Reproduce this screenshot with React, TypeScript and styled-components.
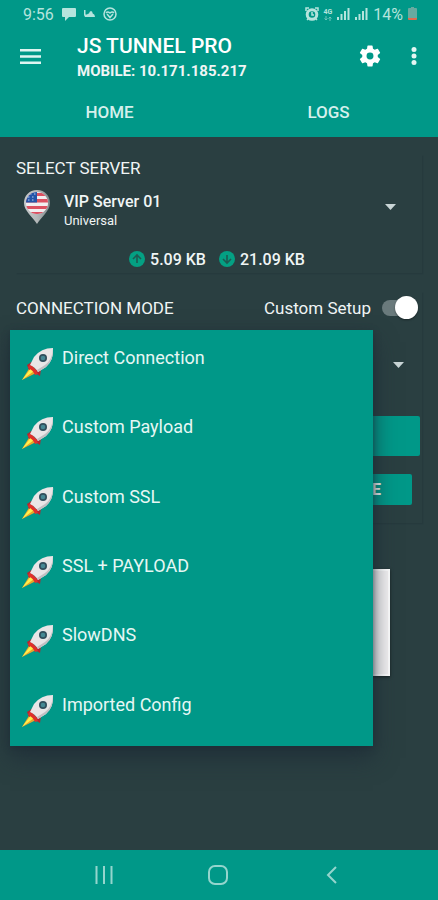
import React, { useState } from "react";
import styled, { createGlobalStyle } from "styled-components";

const teal = "#009888";
const slate = "#2a3f41";

const GlobalStyle = createGlobalStyle`
  * { box-sizing: border-box; }
  body { margin: 0; background: ${slate}; font-family: Roboto, "Liberation Sans", sans-serif; }
  button { font: inherit; color: inherit; background: none; border: 0; padding: 0; cursor: pointer; }
  h1, h2, p, ul { margin: 0; padding: 0; }
  svg { display: block; flex: none; }
`;

const Screen = styled.div`
  display: flex;
  flex-direction: column;
  min-height: 100vh;
  color: #f0f5f5;
  background: ${slate};
`;

const Header = styled.header`
  background: ${teal};
`;

const StatusBar = styled.div`
  display: flex;
  justify-content: space-between;
  align-items: center;
  height: 28px;
  padding: 0 21px 0 23px;
  font-size: 16px;
  color: #b5e4dd;
`;

const StatusGroup = styled.div<{ $gap: number }>`
  display: flex;
  align-items: center;
  gap: ${(p) => p.$gap}px;
`;

const NetworkLabel = styled.span`
  display: flex;
  flex-direction: column;
  align-items: center;
  font-size: 7px;
  line-height: 8px;
  font-weight: 700;
`;

const AppBar = styled.div`
  display: flex;
  align-items: flex-start;
  height: 58px;
  padding: 5px 12px 0 18px;
`;

const IconButton = styled.button`
  display: grid;
  place-items: center;
  width: 24px;
  height: 46px;
`;

const Heading = styled.div`
  flex: 1;
  margin-left: 35px;
`;

const AppTitle = styled.h1`
  font-size: 21px;
  line-height: 26px;
  font-weight: 500;
  color: #fff;
`;

const Address = styled.p`
  font-size: 15px;
  line-height: 24px;
  font-weight: 700;
`;

const BarActions = styled.div`
  display: flex;
  gap: 21px;
`;

const Tabs = styled.nav`
  display: grid;
  grid-template-columns: 1fr 1fr;
  height: 51px;
`;

const Tab = styled.button`
  font-size: 17px;
  font-weight: 500;
  color: #d5f0ec;
`;

const Main = styled.main`
  flex: 1;
  padding: 18px 16px 0;
`;

const ServerCard = styled.section`
  height: 118px;
  box-shadow: 1px 1px 1px #263a3d;
`;

const SectionTitle = styled.h2`
  font-size: 17px;
  line-height: 26px;
  font-weight: 400;
`;

const ServerPicker = styled.button`
  display: flex;
  align-items: center;
  width: 100%;
  height: 52px;
  padding: 0 26px 0 8px;
  text-align: left;
`;

const ServerText = styled.span`
  flex: 1;
  margin-left: 14px;
  padding-top: 6px;
`;

const ServerName = styled.span`
  display: block;
  font-size: 16px;
  line-height: 22px;
  font-weight: 500;
`;

const ServerRegion = styled.span`
  display: block;
  font-size: 13px;
  line-height: 16px;
`;

const Traffic = styled.div`
  display: flex;
  justify-content: center;
  align-items: center;
  gap: 13px;
  height: 52px;
  padding-right: 4px;
`;

const Counter = styled.span`
  display: flex;
  align-items: center;
  gap: 5px;
  font-size: 16px;
  font-weight: 500;
`;

const ModeCard = styled.section`
  position: relative;
  margin-top: 19px;
  padding-bottom: 18px;
  box-shadow: 1px 1px 1px #263a3d;
`;

const ModeHeader = styled.div`
  display: flex;
  justify-content: space-between;
  align-items: center;
  height: 32px;
`;

const SwitchLabel = styled.label`
  display: flex;
  align-items: center;
  gap: 11px;
  padding-right: 4px;
  font-size: 17px;
`;

const Switch = styled.input`
  appearance: none;
  position: relative;
  width: 36px;
  height: 16px;
  margin: 0;
  border-radius: 8px;
  background: #6a7a7c;
  cursor: pointer;

  &::after {
    content: "";
    position: absolute;
    top: -4px;
    left: 0;
    width: 23px;
    height: 23px;
    border-radius: 50%;
    background: #fff;
    box-shadow: 0 1px 2px #0006;
  }

  &:checked::after {
    left: 13px;
  }
`;

const ModePicker = styled.button`
  display: flex;
  justify-content: flex-end;
  align-items: center;
  width: 100%;
  height: 92px;
  padding: 0 18px 11px 0;
`;

const StartButton = styled.button`
  display: block;
  width: calc(100% - 2px);
  height: 40px;
  border-radius: 2px;
  background: ${teal};
`;

const ActionButton = styled.button`
  display: block;
  width: calc(50% - 6px);
  height: 31px;
  margin: 18px 10px 0 auto;
  padding-right: 31px;
  border-radius: 2px;
  background: ${teal};
  font-size: 16px;
  font-weight: 700;
  text-align: right;
`;

const Banner = styled.div`
  height: 107px;
  margin: 46px 32px 0;
  background: #f5f3f4;
  border: 2px solid #fff;
  box-shadow: 0 1px 3px #0008;
`;

const Menu = styled.ul`
  position: absolute;
  z-index: 1;
  top: 38px;
  left: -6px;
  right: 49px;
  display: grid;
  grid-auto-rows: 1fr;
  height: 416px;
  background: ${teal};
  box-shadow: 0 12px 22px #1d2a36aa, 0 2px 6px #1d2a3699;
  list-style: none;
`;

const MenuItem = styled.button`
  display: flex;
  align-items: flex-start;
  gap: 8px;
  width: 100%;
  height: 100%;
  padding: 16px 11px 0;
  font-size: 18px;
  line-height: 24px;
  text-align: left;
  color: #e6f7f4;

  svg {
    margin-top: 2px;
  }
`;

const SystemNav = styled.footer`
  display: flex;
  justify-content: center;
  align-items: center;
  gap: 90px;
  height: 50px;
  padding-right: 3px;
  background: ${teal};
`;

const Chat = () => (
  <svg width="14" height="14" viewBox="0 0 14 14" fill="currentColor">
    <path d="M1 1h12q1 0 1 1v7q0 1-1 1H7l-4 4v-4H1Q0 10 0 9V2Q0 1 1 1z" />
  </svg>
);

const Camel = () => (
  <svg width="11" height="10" viewBox="0 0 11 10" fill="currentColor">
    <path d="M0 1h1.500v4.500H3Q4 4.500 5 4.500 5.500 2 7 2t1.700 2.500Q11 5 11 8H1L0 6z" />
  </svg>
);

const Ring = () => (
  <svg width="14" height="14" viewBox="0 0 14 14" fill="none" stroke="currentColor" strokeWidth="1.500">
    <circle cx="7" cy="7" r="6" />
    <path d="M3 6q1.500-2 4 0q2.500-2 4 0M4 7l3 3.500L10 7" />
  </svg>
);

const Alarm = () => (
  <svg width="14" height="14" viewBox="0 0 14 14" fill="none" stroke="currentColor">
    <circle cx="7" cy="7.500" r="4.800" strokeWidth="3" />
    <path d="M7 5v3h2M1 4V1h3M10 1h3v3M2 13l2-2M12 13l-2-2" strokeWidth="1.500" />
  </svg>
);

const DataArrows = () => (
  <svg width="8" height="5" viewBox="0 0 8 5" fill="none" stroke="currentColor" opacity="0.6">
    <path d="M2 0v4M.5 2.500 2 4l1.500-1.500M6 5V1M4.500 2.500 6 1l1.500 1.500" />
  </svg>
);

const Signal = () => (
  <svg width="13" height="12" viewBox="0 0 13 12" fill="currentColor">
    <path d="M0 9h2v3H0zM3.500 6h2v6h-2zM7 3h2v9H7zM10.500 0h2v12h-2z" />
  </svg>
);

const Battery = () => (
  <svg width="9" height="14" viewBox="0 0 9 14">
    <path d="M3 0h3v1h2q1 0 1 1v10H0V2q0-1 1-1h2z" fill="#68aaa0" />
    <path d="M0 11h9v1q0 1-1 1H1q-1 0-1-1z" fill="#e26a4e" />
  </svg>
);

const MenuIcon = () => (
  <svg width="21" height="15" viewBox="0 0 21 15" fill="#def5f1">
    <path d="M0 0h21v2.500H0zM0 6.200h21v2.500H0zM0 12.400h21v2.500H0z" />
  </svg>
);

const Gear = () => (
  <svg width="26" height="26" viewBox="0 0 24 24" fill="#fff">
    <path d="M19.140 12.940c.04-.3.06-.61.06-.94s-.02-.64-.07-.94l2.030-1.580a.49.49 0 0 0 .12-.61l-1.920-3.320a.49.49 0 0 0-.59-.22l-2.390.96a7 7 0 0 0-1.620-.94l-.36-2.540a.48.48 0 0 0-.48-.41h-3.840a.47.47 0 0 0-.47.41l-.36 2.540c-.59.24-1.130.57-1.620.94l-2.390-.96a.48.48 0 0 0-.59.22L2.740 8.870a.48.48 0 0 0 .12.61l2.030 1.580a6 6 0 0 0 0 1.880l-2.030 1.580a.49.49 0 0 0-.12.61l1.920 3.320c.12.22.37.29.59.22l2.390-.96c.5.38 1.030.7 1.620.94l.36 2.540c.05.24.24.41.48.41h3.840c.24 0 .44-.17.47-.41l.36-2.540c.59-.24 1.130-.56 1.620-.94l2.390.96c.22.08.47 0 .59-.22l1.920-3.320a.47.47 0 0 0-.12-.61zM12 15.200a3.200 3.200 0 1 1 0-6.400 3.200 3.200 0 0 1 0 6.400z" />
  </svg>
);

const Dots = () => (
  <svg width="6" height="20" viewBox="0 0 6 20" fill="#e2f6f3">
    <circle cx="3" cy="3.500" r="2.500" />
    <circle cx="3" cy="10" r="2.500" />
    <circle cx="3" cy="16.500" r="2.500" />
  </svg>
);

const FlagPin = () => (
  <svg width="26" height="34" viewBox="0 0 26 34">
    <defs>
      <clipPath id="flag-disc">
        <circle cx="13" cy="13" r="11" />
      </clipPath>
      <linearGradient id="pin-metal" x1="0" x2="1">
        <stop offset="0" stopColor="#c6c9ca" />
        <stop offset=".5" stopColor="#b4b8b9" />
        <stop offset="1" stopColor="#7d8789" />
      </linearGradient>
    </defs>
    <path d="M13 0C5 0 0 6 0 13c0 8 9 14 13 21 4-7 13-13 13-21C26 6 21 0 13 0z" fill="url(#pin-metal)" />
    <g clipPath="url(#flag-disc)">
      <path d="M0 0h26v26H0z" fill="#f2eef0" />
      <path d="M0 3h26v3H0zM0 9h26v3.500H0zM0 16h26v3H0zM0 22h26v3H0z" fill="#dc5061" />
      <path d="M0 0h13v12.500H0z" fill="#2454a8" />
      <path d="M4 7h1.500M8 7h1.500M6 4h1.500M10 4h1.500M4 10h1.500M8 10h1.500" stroke="#b9cdf0" strokeWidth="1.200" />
    </g>
  </svg>
);

const Rocket = () => (
  <svg width="33" height="33" viewBox="0 0 33 33">
    <path d="M9 19 1 32l14-7z" fill="#e9a72a" />
    <path d="M10 20 1 32l12-9z" fill="#fff04d" />
    <path d="M12 13 6 17l2 5 6-4zM20 21l-1 7-5-3 1-6z" fill="#b32631" />
    <path d="M8 17q6 1 9 9l-3 1q-2-5-7-7z" fill="#df302b" />
    <path d="M32 0Q20 0 13 9L9 17q5 2 8 7l8-5q8-7 7-19z" fill="#e9e6e7" />
    <path d="M32 0q0 11-8 17l-8 5 1 2 8-5q8-7 7-19z" fill="#c3bfc3" />
    <circle cx="22" cy="10" r="4" fill="#314f5d" />
    <circle cx="22" cy="10" r="2.300" fill="#468894" />
  </svg>
);

const Arrow = ({ down = false }: { down?: boolean }) => (
  <svg width="16" height="16" viewBox="0 0 16 16">
    <circle cx="8" cy="8" r="8" fill="#04a083" />
    <path
      d={down ? "M8 4v8M4 8l4 4 4-4" : "M8 12V4M4 8l4-4 4 4"}
      fill="none"
      stroke="#1d5a52"
      strokeWidth="1.600"
    />
  </svg>
);

const Caret = () => (
  <svg width="11" height="6" viewBox="0 0 11 6" fill="#c9d5d6">
    <path d="M0 0h11L5.500 6z" />
  </svg>
);

const modes = [
  "Direct Connection",
  "Custom Payload",
  "Custom SSL",
  "SSL + PAYLOAD",
  "SlowDNS",
  "Imported Config",
];

export default function App() {
  const [open, setOpen] = useState(true);
  const [custom, setCustom] = useState(true);

  return (
    <>
      <GlobalStyle />
      <Screen>
        <Header>
          <StatusBar>
            <StatusGroup $gap={8}>
              <span>9:56</span>
              <Chat />
              <Camel />
              <Ring />
            </StatusGroup>
            <StatusGroup $gap={5}>
              <Alarm />
              <NetworkLabel>
                4G
                <DataArrows />
              </NetworkLabel>
              <Signal />
              <Signal />
              <span>14%</span>
              <Battery />
            </StatusGroup>
          </StatusBar>
          <AppBar>
            <IconButton aria-label="Menu">
              <MenuIcon />
            </IconButton>
            <Heading>
              <AppTitle>JS TUNNEL PRO</AppTitle>
              <Address>MOBILE: 10.171.185.217</Address>
            </Heading>
            <BarActions>
              <IconButton aria-label="Settings">
                <Gear />
              </IconButton>
              <IconButton aria-label="More">
                <Dots />
              </IconButton>
            </BarActions>
          </AppBar>
          <Tabs>
            <Tab>HOME</Tab>
            <Tab>LOGS</Tab>
          </Tabs>
        </Header>

        <Main>
          <ServerCard>
            <SectionTitle>SELECT SERVER</SectionTitle>
            <ServerPicker aria-haspopup="listbox">
              <FlagPin />
              <ServerText>
                <ServerName>VIP Server 01</ServerName>
                <ServerRegion>Universal</ServerRegion>
              </ServerText>
              <Caret />
            </ServerPicker>
            <Traffic>
              <Counter>
                <Arrow />
                5.09 KB
              </Counter>
              <Counter>
                <Arrow down />
                21.09 KB
              </Counter>
            </Traffic>
          </ServerCard>

          <ModeCard>
            <ModeHeader>
              <SectionTitle>CONNECTION MODE</SectionTitle>
              <SwitchLabel>
                Custom Setup
                <Switch
                  type="checkbox"
                  role="switch"
                  checked={custom}
                  onChange={(e) => setCustom(e.target.checked)}
                />
              </SwitchLabel>
            </ModeHeader>
            <ModePicker
              aria-label="Connection mode"
              aria-haspopup="menu"
              aria-expanded={open}
              onClick={() => setOpen(!open)}
            >
              <Caret />
            </ModePicker>
            <StartButton aria-label="Start" />
            <ActionButton>E</ActionButton>
            {open && (
              <Menu>
                {modes.map((mode) => (
                  <li key={mode}>
                    <MenuItem onClick={() => setOpen(false)}>
                      <Rocket />
                      {mode}
                    </MenuItem>
                  </li>
                ))}
              </Menu>
            )}
          </ModeCard>

          <Banner />
        </Main>

        <SystemNav>
          <IconButton aria-label="Recent apps">
            <svg width="18" height="18" viewBox="0 0 18 18" stroke="#94d5cd" strokeWidth="2">
              <path d="M1.500 0v18M9 0v18M16.500 0v18" />
            </svg>
          </IconButton>
          <IconButton aria-label="Home">
            <svg width="20" height="20" viewBox="0 0 20 20" fill="none" stroke="#94d5cd" strokeWidth="2">
              <rect x="1" y="1" width="18" height="18" rx="6" />
            </svg>
          </IconButton>
          <IconButton aria-label="Back">
            <svg width="11" height="18" viewBox="0 0 11 18" fill="none" stroke="#94d5cd" strokeWidth="2">
              <path d="M10 1 2 9l8 8" />
            </svg>
          </IconButton>
        </SystemNav>
      </Screen>
    </>
  );
}
